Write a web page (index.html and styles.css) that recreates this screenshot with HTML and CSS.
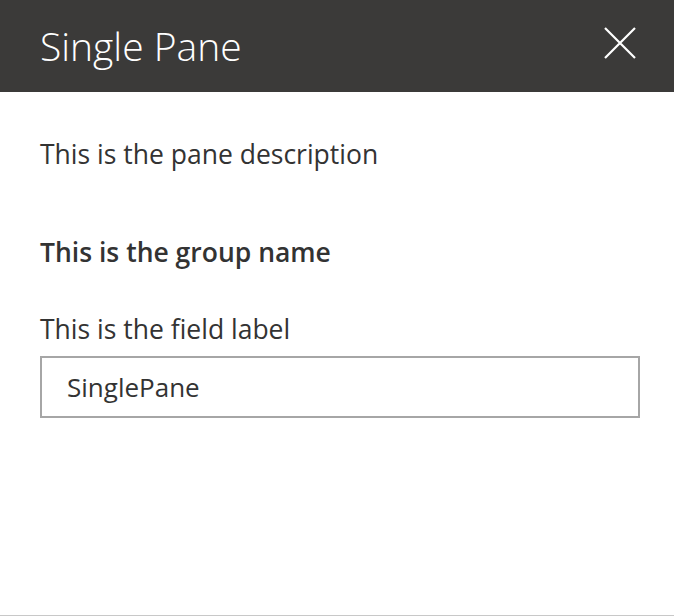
FILE: index.html
```html
<!DOCTYPE html>
<html lang="en">
<head>
<meta charset="utf-8">
<title>Single Pane</title>
<link rel="stylesheet" href="styles.css">
</head>
<body>
<div class="pane">
  <header class="pane-header">
    <h1 class="pane-title">Single Pane</h1>
    <button class="close-btn" aria-label="Close">
      <svg width="32" height="32" viewBox="0 0 32 32" aria-hidden="true">
        <path d="M1 1 L31 31 M31 1 L1 31" stroke="#ffffff" stroke-width="2.2" fill="none"/>
      </svg>
    </button>
  </header>
  <main class="pane-body">
    <p class="pane-desc">This is the pane description</p>
    <h2 class="group-name">This is the group name</h2>
    <label class="field-label" for="f1">This is the field label</label>
    <input id="f1" class="text-field" type="text" value="SinglePane">
  </main>
</div>
</body>
</html>
```

FILE: styles.css
```css
* { box-sizing: border-box; }
html, body { margin: 0; padding: 0; background: #ffffff; }
body {
  font-family: "Open Sans", "Noto Sans", "Liberation Sans", sans-serif;
  color: #333333;
}
.pane {
  height: 616px;
  border-bottom: 1px solid #c8c8c8;
  display: flex;
  flex-direction: column;
}
.pane-header {
  height: 92px;
  background: #3b3a39;
  display: flex;
  justify-content: space-between;
  align-items: flex-start;
  padding: 18px 38px 0 40px;
}
.pane-title {
  margin: 0;
  font-size: 39px;
  font-weight: 300;
  line-height: 56px;
  color: #ffffff;
}
.close-btn {
  margin-top: 9px;
  width: 32px;
  height: 32px;
  padding: 0;
  border: 0;
  background: transparent;
  display: flex;
}
.pane-body {
  padding: 44px 34px 0 40px;
  display: flex;
  flex-direction: column;
  align-items: flex-start;
}
.pane-desc {
  margin: 0;
  font-size: 26.5px;
  line-height: 36px;
}
.group-name {
  margin: 62px 0 0;
  font-size: 26.5px;
  font-weight: 600;
  line-height: 36px;
}
.field-label {
  margin-top: 41px;
  font-size: 26.5px;
  line-height: 36px;
}
.text-field {
  margin-top: 9px;
  width: 600px;
  height: 62px;
  border: 2px solid #a6a6a6;
  border-radius: 0;
  padding: 0 0 0 25px;
  font-family: inherit;
  font-size: 26px;
  color: #333333;
  background: #ffffff;
  outline: none;
}
```
